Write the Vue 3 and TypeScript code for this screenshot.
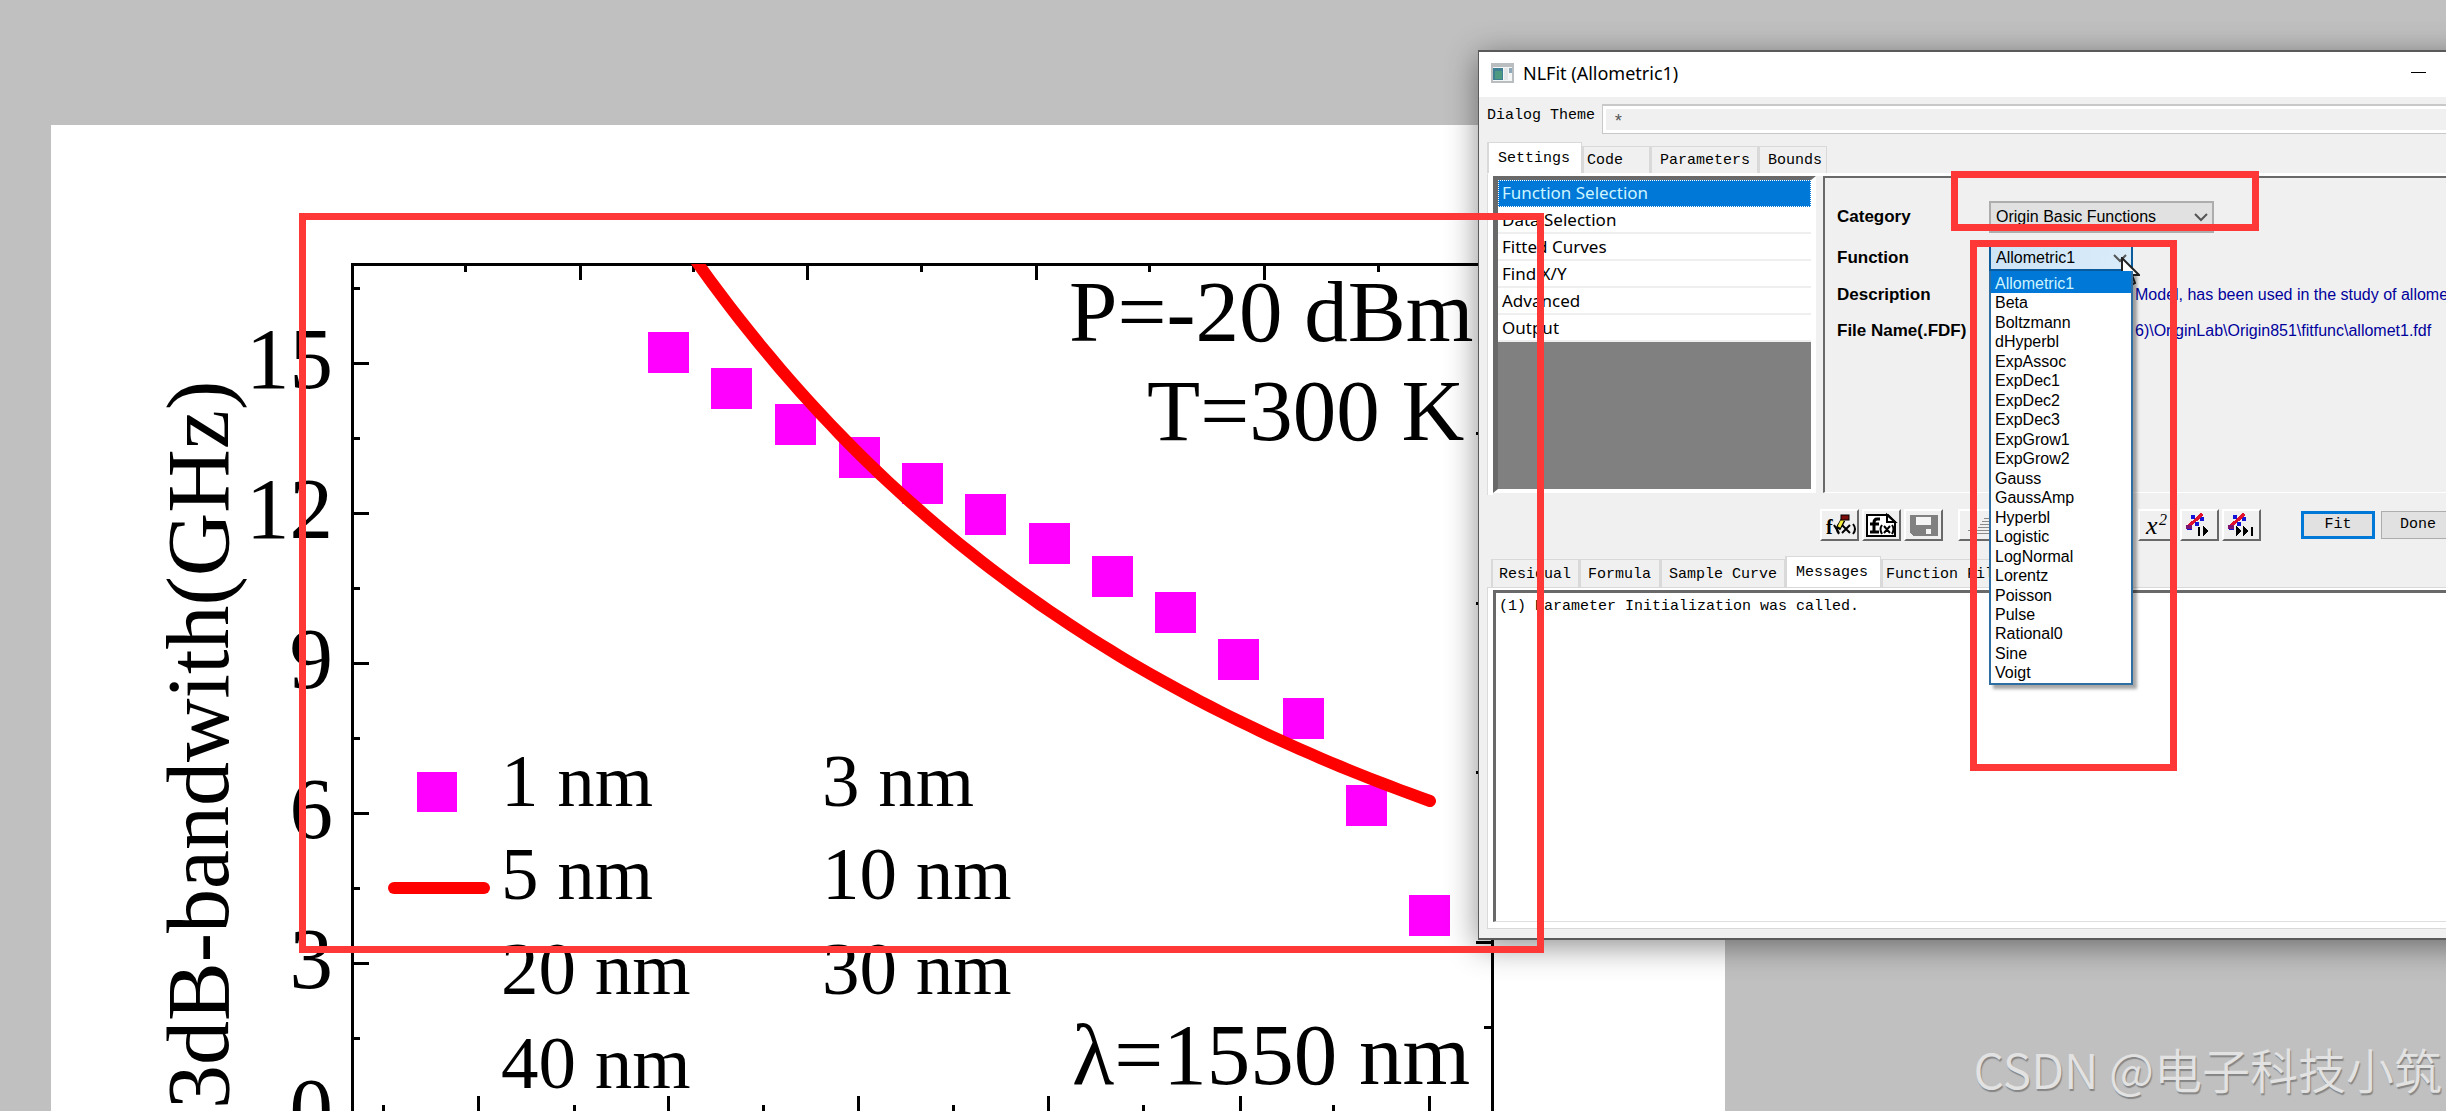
<script setup lang="ts">
import { ref } from 'vue'

interface Point { x: number; y: number }
interface Label { x: number; y: number; text: string }

const yTicks = [
  { y: 388, text: '15' },
  { y: 538, text: '12' },
  { y: 688, text: '9' },
  { y: 838, text: '6' },
  { y: 988, text: '3' },
  { y: 1138, text: '0' },
]
const leftMajor = [363, 513, 663, 813, 963]
const leftMinor = [288, 438, 588, 738, 888, 1038]
const topMajor = [580, 807, 1036, 1264]
const topMinor = [465, 693, 921, 1149, 1378]
const bottomMajor = [478, 668, 858, 1048, 1240, 1429]
const bottomMinor = [383, 574, 763, 953, 1143, 1333]
const rightMajor = [433, 603, 772, 942]

const samples: Point[] = [
  { x: 668, y: 352 }, { x: 731, y: 388 }, { x: 795, y: 424 }, { x: 859, y: 457 },
  { x: 922, y: 483 }, { x: 985, y: 514 }, { x: 1049, y: 543 }, { x: 1112, y: 576 },
  { x: 1175, y: 612 }, { x: 1238, y: 659 }, { x: 1303, y: 718 }, { x: 1366, y: 805 },
  { x: 1429, y: 915 },
]

function allometric(x: number): number {
  return 1112 - 847 * Math.pow((x + 1000) / 1699, -2.8)
}
function curve(from: number, to: number, step: number): string {
  const parts: string[] = []
  for (let x = from; x <= to; x += step) parts.push(`${x} ${allometric(x).toFixed(1)}`)
  return 'M' + parts.join('L')
}
const fitPath = curve(680, 1430, 10)

const legend: Label[] = [
  { x: 501, y: 806, text: '1 nm' }, { x: 822, y: 806, text: '3 nm' },
  { x: 501, y: 899, text: '5 nm' }, { x: 822, y: 899, text: '10 nm' },
  { x: 501, y: 994, text: '20 nm' }, { x: 822, y: 994, text: '30 nm' },
  { x: 501, y: 1088, text: '40 nm' },
]
const notes: Label[] = [
  { x: 1069, y: 341, text: 'P=-20 dBm' },
  { x: 1147, y: 440, text: 'T=300 K' },
  { x: 1072, y: 1084, text: 'λ=1550 nm' },
]

const topTabs = ['Settings', 'Code', 'Parameters', 'Bounds']
const bottomTabs = ['Residual', 'Formula', 'Sample Curve', 'Messages', 'Function File']
const sections = ['Function Selection', 'Data Selection', 'Fitted Curves', 'Find X/Y', 'Advanced', 'Output']
const functions = [
  'Allometric1', 'Beta', 'Boltzmann', 'dHyperbl', 'ExpAssoc', 'ExpDec1', 'ExpDec2', 'ExpDec3',
  'ExpGrow1', 'ExpGrow2', 'Gauss', 'GaussAmp', 'Hyperbl', 'Logistic', 'LogNormal', 'Lorentz',
  'Poisson', 'Pulse', 'Rational0', 'Sine', 'Voigt',
]

const topTab = ref('Settings')
const bottomTab = ref('Messages')
const section = ref('Function Selection')
const fn = ref('Allometric1')
const theme = ref('*')
</script>

<template>
  <main class="desktop">
    <section class="page">
      <svg class="chart" viewBox="51 125 1674 1020" role="img" aria-label="3dB bandwidth chart">
        <defs>
          <clipPath id="plot"><rect x="353" y="264" width="1138" height="860" /></clipPath>
        </defs>
        <g class="axis">
          <path d="M352 1145V264H1492V1145" />
          <path v-for="y in leftMajor" :key="'a' + y" :d="`M352 ${y}h17`" />
          <path v-for="y in leftMinor" :key="'b' + y" :d="`M352 ${y}h8`" />
          <path v-for="x in topMajor" :key="'c' + x" :d="`M${x} 264v16`" />
          <path v-for="x in topMinor" :key="'d' + x" :d="`M${x} 264v8`" />
          <path v-for="x in bottomMajor" :key="'e' + x" :d="`M${x} 1096v30`" />
          <path v-for="x in bottomMinor" :key="'f' + x" :d="`M${x} 1105v20`" />
          <path v-for="y in rightMajor" :key="'g' + y" :d="`M1476 ${y}h16`" />
          <path d="M1484 1027h8" />
        </g>
        <rect v-for="p in samples" :key="p.x" class="sample" :x="p.x - 20" :y="p.y - 20" width="41" height="41" />
        <path class="fit" :d="fitPath" clip-path="url(#plot)" />
        <rect class="sample" x="417" y="772" width="40" height="40" />
        <path class="fit" d="M394 888H484" />
        <text v-for="t in yTicks" :key="t.text" class="big" x="333" :y="t.y" text-anchor="end">{{ t.text }}</text>
        <text v-for="t in notes" :key="t.text" class="big" :x="t.x" :y="t.y">{{ t.text }}</text>
        <text v-for="t in legend" :key="t.text" class="small" :x="t.x" :y="t.y">{{ t.text }}</text>
        <text class="title-y" transform="translate(228 1109) rotate(-90)">3dB-bandwith(GHz)</text>
      </svg>
    </section>

    <section class="dialog" aria-label="NLFit">
      <header class="titlebar">
        <svg class="app-icon" viewBox="0 0 23 20" shape-rendering="crispEdges">
          <rect width="23" height="20" fill="#b9bdc0" />
          <rect x="2" y="4" width="19" height="14" fill="#f4f6f6" />
          <rect x="2" y="5" width="10" height="12" fill="#3f7f94" />
          <rect x="4" y="8" width="7" height="8" fill="#4d9a80" />
          <rect x="13" y="5" width="4" height="12" fill="#e4e6e8" />
          <rect x="18" y="5" width="3" height="5" fill="#8fa9b8" />
        </svg>
        <h1>NLFit (Allometric1)</h1>
        <button class="minimize" aria-label="Minimize"></button>
      </header>

      <div class="theme">
        <label for="theme">Dialog Theme</label>
        <input id="theme" v-model="theme" type="text" />
      </div>

      <div class="tabs upper">
        <button v-for="t in topTabs" :key="t" :class="{ active: t === topTab }" @click="topTab = t">{{ t }}</button>
      </div>
      <div class="settings">
        <ul class="sections">
          <li v-for="s in sections" :key="s" :class="{ selected: s === section }" @click="section = s">{{ s }}</li>
        </ul>
        <div class="details">
          <div class="field">
            <label for="category">Category</label>
            <span class="drop wide">
              <select id="category"><option>Origin Basic Functions</option></select>
              <svg viewBox="0 0 14 10"><path d="M1 2L7 8L13 2" /></svg>
            </span>
          </div>
          <div class="field fn">
            <label for="function">Function</label>
            <div class="drop open">
              <select id="function" v-model="fn"><option v-for="f in functions" :key="f">{{ f }}</option></select>
              <svg viewBox="0 0 14 10"><path d="M1 2L7 8L13 2" /></svg>
              <ul class="menu">
                <li v-for="f in functions" :key="f" :class="{ selected: f === fn }" @click="fn = f">{{ f }}</li>
              </ul>
            </div>
          </div>
          <div class="field info"><b>Description</b><span>Model, has been used in the study of allome</span></div>
          <div class="field info"><b>File Name(.FDF)</b><span>6)\OriginLab\Origin851\fitfunc\allomet1.fdf</span></div>
        </div>
      </div>

      <div class="toolbar">
        <button class="tool" aria-label="Edit function">
          <svg viewBox="0 0 36 28">
            <text x="4" y="23" class="glyph">f</text>
            <path d="M17 13q-4 5 0 10M31 13q4 5 0 10" fill="none" stroke="#000" stroke-width="2" />
            <path d="M20 14l8 8M28 14l-8 8M12 14l5 8" stroke="#000" stroke-width="2" />
            <path d="M16 18l5-9" stroke="#000" stroke-width="5" />
            <path d="M17 16l4-8" stroke="#f5ee3c" stroke-width="3" />
            <rect x="19" y="4" width="8" height="5" fill="#7c0b0b" stroke="#000" />
          </svg>
        </button>
        <button class="tool" aria-label="Function file">
          <svg viewBox="0 0 36 28">
            <path d="M3 4H24L31 11V25H3Z" fill="#fff" stroke="#000" stroke-width="2" />
            <path d="M23 4V11H31Z" fill="#fff" stroke="#000" stroke-width="2" />
            <path d="M16 8h-3q-3 0-3 4v9M6 13h9M6 21h9" fill="none" stroke="#000" stroke-width="3" />
            <path d="M18 14q-3 4 0 9M28 14q3 4 0 9M20 15l6 7M26 15l-6 7" fill="none" stroke="#000" stroke-width="2" />
          </svg>
        </button>
        <button class="tool" aria-label="Save">
          <svg viewBox="0 0 36 28" shape-rendering="crispEdges">
            <path d="M4 4H32V25H7L4 22Z" fill="#808080" />
            <rect x="10" y="6" width="15" height="8" fill="#f4f4f4" />
            <rect x="20" y="18" width="5" height="5" fill="#f4f4f4" />
          </svg>
        </button>
        <button class="tool apart" aria-label="Initialize">
          <svg viewBox="0 0 36 28" shape-rendering="crispEdges">
            <path d="M24 7h10M22 10h12M20 13h14M18 16h16M16 19h18M8 19h4M11 22h23" stroke="#8a8a8a" stroke-width="1" />
          </svg>
        </button>
        <button class="tool far" aria-label="Chi-square">
          <svg viewBox="0 0 36 28">
            <text x="6" y="23" class="chi">x</text>
            <text x="19" y="14" class="power">2</text>
          </svg>
        </button>
        <button class="tool" aria-label="One iteration">
          <svg viewBox="0 0 36 28" shape-rendering="crispEdges">
            <path d="M5 14h5v5h-5zM9 4h4v4h-4zM13 11h4v4h-4zM18 6h4v4h-4z" fill="#1212d8" />
            <path d="M5 17L10 12L14 9L20 3" stroke="#e0102c" stroke-width="3" fill="none" />
            <path d="M4 14h6v4h-6z" fill="#7d1270" />
            <path d="M16 16h2v9h-2zM21 15l6 5l-6 5z" fill="#000" />
          </svg>
        </button>
        <button class="tool" aria-label="Fit until converged">
          <svg viewBox="0 0 36 28" shape-rendering="crispEdges">
            <path d="M5 14h5v5h-5zM9 4h4v4h-4zM13 11h4v4h-4zM18 6h4v4h-4z" fill="#1212d8" />
            <path d="M5 17L10 12L14 9L20 3" stroke="#e0102c" stroke-width="3" fill="none" />
            <path d="M4 14h6v4h-6z" fill="#7d1270" />
            <path d="M12 15l6 5l-6 5zM19 15l6 5l-6 5zM27 16h2v9h-2z" fill="#000" />
          </svg>
        </button>
        <button class="command primary">Fit</button>
        <button class="command">Done</button>
      </div>

      <div class="tabs lower">
        <button v-for="t in bottomTabs" :key="t" :class="{ active: t === bottomTab }" @click="bottomTab = t">{{ t }}</button>
      </div>
      <div class="messages"><p>(1) Parameter Initialization was called.</p></div>
    </section>

    <svg class="pointer" viewBox="0 0 19 29">
      <path d="M1 1V25L6 20L10 28L14 26L11 18H18Z" fill="#fff" stroke="#222" stroke-width="2" />
    </svg>
    <div class="mark mark-plot"></div>
    <div class="mark mark-category"></div>
    <div class="mark mark-function"></div>
    <p class="watermark">CSDN @电子科技小筑</p>
  </main>
</template>

<style>
body {
  margin: 0;
  background: #c0c0c0;
}
</style>

<style scoped>
* {
  box-sizing: border-box;
}
ul, p, h1 {
  margin: 0;
  padding: 0;
  list-style: none;
}
button, input, select {
  margin: 0;
  padding: 0;
  border: 0;
  border-radius: 0;
  background: none;
  color: #000;
  font: inherit;
}
.desktop {
  position: relative;
  height: 100vh;
  overflow: hidden;
  background: #c0c0c0;
  color: #000;
}
.page {
  width: 1674px;
  margin: 125px 0 0 51px;
  background: #fff;
}
.chart {
  display: block;
  width: 100%;
  font-family: "Liberation Serif", "Times New Roman", serif;
}
.axis path {
  fill: none;
  stroke: #000;
  stroke-width: 3px;
  shape-rendering: crispEdges;
}
.sample {
  fill: #f0f;
}
.fit {
  fill: none;
  stroke: #f00;
  stroke-width: 12px;
  stroke-linecap: round;
  stroke-linejoin: round;
}
.big {
  font-size: 87px;
}
.small {
  font-size: 75px;
}
.title-y {
  font-size: 88px;
}

.dialog {
  position: absolute;
  top: 50px;
  left: 1478px;
  right: -120px;
  padding-bottom: 9px;
  border: 1px solid #5a5a5a;
  border-width: 2px 1px;
  background: #f0f0f0;
  box-shadow: 0 6px 30px rgba(0, 0, 0, 0.45);
  font: 15px/20px "Liberation Mono", "Courier New", monospace;
}
.titlebar {
  display: flex;
  align-items: center;
  height: 45px;
  padding: 0 139px 4px 12px;
  background: #fff;
}
.app-icon {
  width: 23px;
  height: 20px;
}
.titlebar h1 {
  flex: 1;
  margin-left: 9px;
  font: 18px/24px "Noto Sans", "Open Sans", sans-serif;
}
.minimize {
  width: 15px;
  height: 1px;
  background: #000;
}
.theme {
  display: flex;
  align-items: flex-start;
  gap: 7px;
  padding: 7px 0 8px 8px;
}
.theme label {
  padding-top: 2px;
}
.theme input {
  flex: 1;
  height: 30px;
  padding: 4px 10px 0;
  border: 1px solid #c8c8c8;
  border-top-width: 2px;
  background: #f0f0f0;
  box-shadow: inset 0 0 0 3px #fff;
  color: #555;
  font-size: 18px;
}
.tabs {
  display: flex;
  align-items: flex-end;
  padding-left: 8px;
}
.tabs button {
  height: 27px;
  border: 1px solid #d9d9d9;
  border-bottom: 0;
  border-left-width: 2px;
  text-align: left;
}
.tabs button.active {
  height: 31px;
  background: #fff;
}
.upper button {
  padding: 2px 0 0 8px;
}
.upper button:nth-child(1) {
  width: 95px;
  padding: 1px 0 0 9px;
}
.upper button:nth-child(2) {
  width: 68px;
  padding-left: 3px;
}
.upper button:nth-child(3) {
  width: 108px;
}
.upper button:nth-child(4) {
  width: 69px;
}
.settings {
  display: flex;
  gap: 7px;
  height: 322px;
  margin-left: 8px;
  padding: 2px 0 2px 5px;
  border-left: 1px solid #dcdcdc;
  border-top: 1px solid #fff;
  background: linear-gradient(#fff, #fff) 0 0 / 5px 100% no-repeat, #f0f0f0;
  box-shadow: inset 0 2px #fff;
}
.sections {
  width: 323px;
  height: 317px;
  border-left: 5px solid #696969;
  border-top: 4px solid #696969;
  border-right: 5px solid #fff;
  border-bottom: 4px solid #fff;
  background: #808080;
  font: 17px/26px "Noto Sans", "Open Sans", sans-serif;
}
.sections li {
  height: 27px;
  padding-left: 4px;
  border-bottom: 2px solid #efefef;
  background: #fff;
  white-space: nowrap;
}
.sections li.selected {
  outline: 1px dotted #fff;
  outline-offset: -1px;
  border-bottom-color: #0078d7;
  background: #0078d7;
  color: #cdf4ff;
}
.details {
  flex: 1;
  height: 317px;
  padding: 23px 0 0 12px;
  border-left: 2px solid #696969;
  border-top: 2px solid #696969;
  border-bottom: 1px solid #fff;
  font: 16px/20px "Liberation Sans", Arial, sans-serif;
}
.field {
  display: flex;
  align-items: center;
  height: 32px;
}
.field label, .field b {
  flex: 0 0 152px;
  font-size: 17px;
  font-weight: bold;
}
.field.fn {
  height: 26px;
  margin: 12px 0;
}
.field.info {
  height: 24px;
  margin-bottom: 12px;
  color: #00009c;
  white-space: nowrap;
}
.info b {
  flex-basis: 298px;
  color: #000;
}
.drop {
  position: relative;
  width: 144px;
  height: 26px;
}
.drop.wide {
  width: 225px;
  height: 32px;
}
.drop select {
  appearance: none;
  width: 100%;
  height: 100%;
  padding: 0 5px;
  border: 2px solid #adadad;
  background: #e1e1e1;
}
.drop.open select {
  border-color: #0a5a9c;
  background: linear-gradient(100deg, #cde4f7, #d9ecfa);
}
.drop > svg {
  position: absolute;
  top: 50%;
  right: 6px;
  width: 14px;
  height: 10px;
  margin-top: -5px;
}
.drop > svg path {
  fill: none;
  stroke: #555;
  stroke-width: 2px;
}
.menu {
  position: absolute;
  z-index: 1;
  top: 100%;
  left: 0;
  display: flex;
  flex-direction: column;
  width: 144px;
  height: 414px;
  border: 2px solid #2f6ea3;
  border-top: 0;
  background: #fff;
  box-shadow: 4px 4px 3px rgba(0, 0, 0, 0.35);
  line-height: 19px;
}
.menu li {
  flex: 1;
  padding-left: 4px;
}
.menu li.selected {
  padding-top: 3px;
  background: #0078d7;
  color: #cdf4ff;
}
.toolbar {
  display: flex;
  align-items: center;
  gap: 3px;
  height: 32px;
  margin: 14px 0 15px 341px;
}
.tool {
  width: 39px;
  height: 32px;
  border: 2px solid #fff;
  border-right-color: #696969;
  border-bottom-color: #696969;
}
.tool svg {
  display: block;
  width: 36px;
  height: 28px;
}
.tool.apart {
  margin-left: 12px;
}
.tool.far {
  margin-left: 138px;
}
.glyph {
  font: bold 20px "Liberation Serif", serif;
}
.chi {
  font: italic 26px "Liberation Serif", serif;
}
.power {
  font: italic 16px "Liberation Serif", serif;
}
.command {
  width: 74px;
  height: 28px;
  margin-left: 3px;
  border: 1px solid #adadad;
  background: #e1e1e1;
}
.command.primary {
  margin-left: 37px;
  border: 3px solid #0078d7;
}
.lower {
  padding-left: 12px;
}
.lower button {
  height: 28px;
  padding: 2px 0 0 6px;
}
.lower button:nth-child(1) {
  width: 88px;
}
.lower button:nth-child(2) {
  width: 81px;
  padding-left: 7px;
}
.lower button:nth-child(3) {
  width: 125px;
  padding-left: 7px;
}
.lower button:nth-child(4) {
  width: 96px;
  padding-left: 9px;
}
.lower button:nth-child(5) {
  width: 132px;
  padding-left: 3px;
}
.messages {
  height: 342px;
  margin-left: 8px;
  padding: 2px 0 6px 5px;
  border: 1px solid #d9d9d9;
  border-right: 0;
  background: #fff;
}
.messages p {
  height: 100%;
  padding: 4px 3px;
  border-top: 3px solid #696969;
  border-left: 3px solid #696969;
  border-bottom: 1px solid #dedede;
}
.pointer {
  position: absolute;
  left: 2121px;
  top: 257px;
  width: 19px;
  height: 29px;
}
.mark {
  position: absolute;
  border: 7px solid #fe3737;
}
.mark-plot {
  left: 299px;
  top: 213px;
  width: 1245px;
  height: 740px;
}
.mark-category {
  left: 1951px;
  top: 171px;
  width: 308px;
  height: 60px;
}
.mark-function {
  left: 1970px;
  top: 240px;
  width: 207px;
  height: 531px;
}
.watermark {
  position: absolute;
  right: 4px;
  bottom: 13px;
  color: #e2e2e2;
  font: 350 48px/60px "Noto Sans CJK SC", sans-serif;
  text-shadow: 1px 2px 1px #858585;
  white-space: nowrap;
}
</style>
